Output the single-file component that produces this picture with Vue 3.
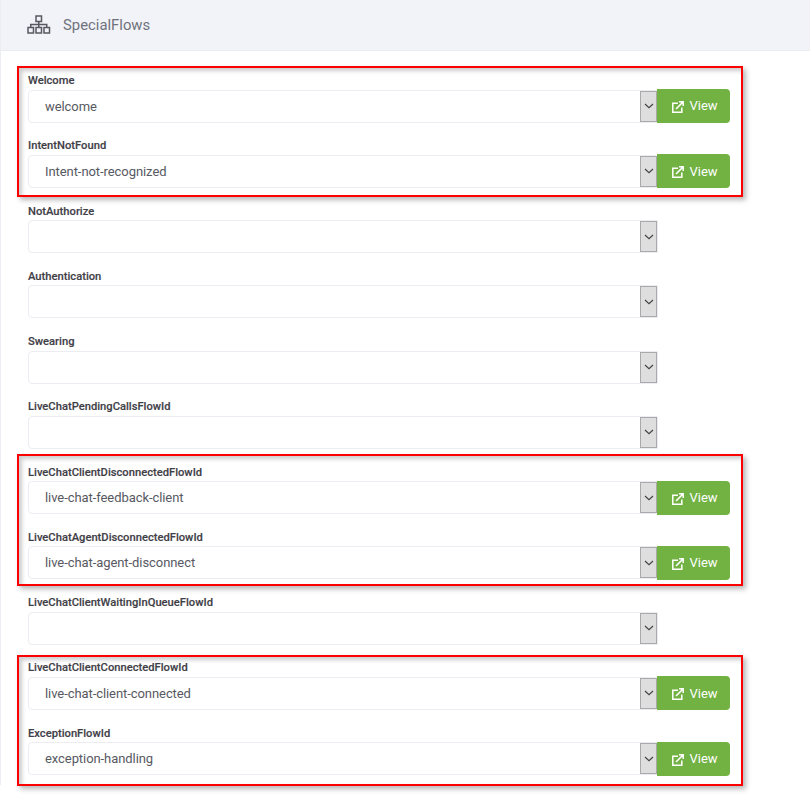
<script setup>
const groups = [
  { box: 'box-a', rows: [
    { label: 'Welcome', value: 'welcome' },
    { label: 'IntentNotFound', value: 'Intent-not-recognized' },
  ]},
  { box: '', rows: [
    { label: 'NotAuthorize', value: '' },
    { label: 'Authentication', value: '' },
    { label: 'Swearing', value: '' },
    { label: 'LiveChatPendingCallsFlowId', value: '' },
  ]},
  { box: 'box-b', rows: [
    { label: 'LiveChatClientDisconnectedFlowId', value: 'live-chat-feedback-client' },
    { label: 'LiveChatAgentDisconnectedFlowId', value: 'live-chat-agent-disconnect' },
  ]},
  { box: '', rows: [
    { label: 'LiveChatClientWaitingInQueueFlowId', value: '' },
  ]},
  { box: 'box-c', rows: [
    { label: 'LiveChatClientConnectedFlowId', value: 'live-chat-client-connected' },
    { label: 'ExceptionFlowId', value: 'exception-handling' },
  ]},
]
</script>

<template>
  <div class="page">
    <header class="head">
      <svg class="head-icon" width="24" height="20" viewBox="0 0 24 20" fill="none" stroke="#575962" stroke-width="1.5">
        <rect x="9" y="1" width="5.5" height="5.5" />
        <rect x="1" y="12.5" width="5.5" height="5.5" />
        <rect x="9" y="12.5" width="5.5" height="5.5" />
        <rect x="17" y="12.5" width="5.5" height="5.5" />
        <path d="M11.75 6.5v6M3.75 12.5V9.5h16v3" />
      </svg>
      <span class="title">SpecialFlows</span>
    </header>
    <main class="form">
      <div v-for="(g, i) in groups" :key="i" class="group" :class="g.box">
        <div v-for="r in g.rows" :key="r.label" class="row">
          <label class="label">{{ r.label }}</label>
          <div class="control">
            <div class="select">
              <span class="value">{{ r.value }}</span>
              <span class="arrow">
                <svg width="10" height="6" viewBox="0 0 10 6" fill="none" stroke="#444" stroke-width="1.2"><path d="M1 1l4 3.6L9 1" /></svg>
              </span>
            </div>
            <button v-if="r.value" class="view" type="button">
              <svg class="view-icon" width="12" height="12" viewBox="0 0 12 12" fill="none" stroke="#fff" stroke-width="1.5">
                <path d="M6 2.2H.8v9h9V6.5" />
                <path d="M4 8L10.6 1.4M7 .8h4.2V5" />
              </svg>
              <span class="view-text">View</span>
            </button>
          </div>
        </div>
      </div>
    </main>
  </div>
</template>

<style scoped>
.page {
  width: 810px;
  height: 795px;
  overflow: hidden;
  background: #fff;
  font-family: Roboto, "Liberation Sans", sans-serif;
  position: relative;
}
.head {
  height: 50px;
  background: #f2f3f8;
  border-bottom: 1px solid #ebedf2;
  border-left: 1px solid #ebedf2;
  display: flex;
  align-items: center;
  padding-left: 26px;
  gap: 12px;
}
.head-icon { flex: none; }
.title {
  font-size: 14.85px;
  font-weight: 400;
  color: #6f727d;
}
.form {
  height: 712px;
  border-left: 1px solid #ebedf2;
  padding: 22px 0 0 27px;
}
.group { position: relative; width: 702px; }
.group.box-a::after,
.group.box-b::after,
.group.box-c::after {
  content: "";
  position: absolute;
  left: -11px;
  right: -13px;
  border: 2px solid #f00;
  box-shadow: 3px 3px 5px rgba(0, 0, 0, 0.28), inset 3px 3px 4px rgba(0, 0, 0, 0.2);
  pointer-events: none;
}
.group.box-a::after { top: -7px; bottom: 6.5px; }
.group.box-b::after { top: -10.5px; bottom: 9.5px; }
.group.box-c::after { top: -5px; bottom: 5px; }
.row {
  height: 65.25px;
  display: flex;
  flex-direction: column;
}
.label {
  font-size: 11.2px;
  font-weight: 500;
  line-height: 16px;
  height: 16px;
  color: #3f4047;
  -webkit-text-stroke: 0.15px #3f4047;
}
.control { display: flex; align-items: center; height: 34px; }
.select {
  width: 630px;
  height: 33px;
  flex: none;
  box-sizing: border-box;
  border: 1px solid #ebedf2;
  border-radius: 4px 0 0 4px;
  display: flex;
  align-items: stretch;
  justify-content: space-between;
  padding-left: 16px;
}
.value {
  font-size: 13px;
  line-height: 31px;
  letter-spacing: -0.07px;
  color: #575962;
}
.arrow {
  width: 17px;
  box-sizing: border-box;
  background: #dedede;
  border: 1px solid #a9a9a9;
  display: flex;
  align-items: center;
  justify-content: center;
}
.view {
  width: 73px;
  height: 34px;
  flex: none;
  margin-left: -1px;
  position: relative;
  border: 0;
  padding: 0 0 0 3px;
  background: #71b243;
  color: #fff;
  border-radius: 0 4px 4px 0;
  font: 400 13px Roboto, "Liberation Sans", sans-serif;
  display: flex;
  align-items: center;
  justify-content: center;
  gap: 5px;
}
.view-icon { margin-top: 2px; }
.view-text { margin-top: -0.5px; }
</style>

<style>
body { margin: 0; }
</style>
